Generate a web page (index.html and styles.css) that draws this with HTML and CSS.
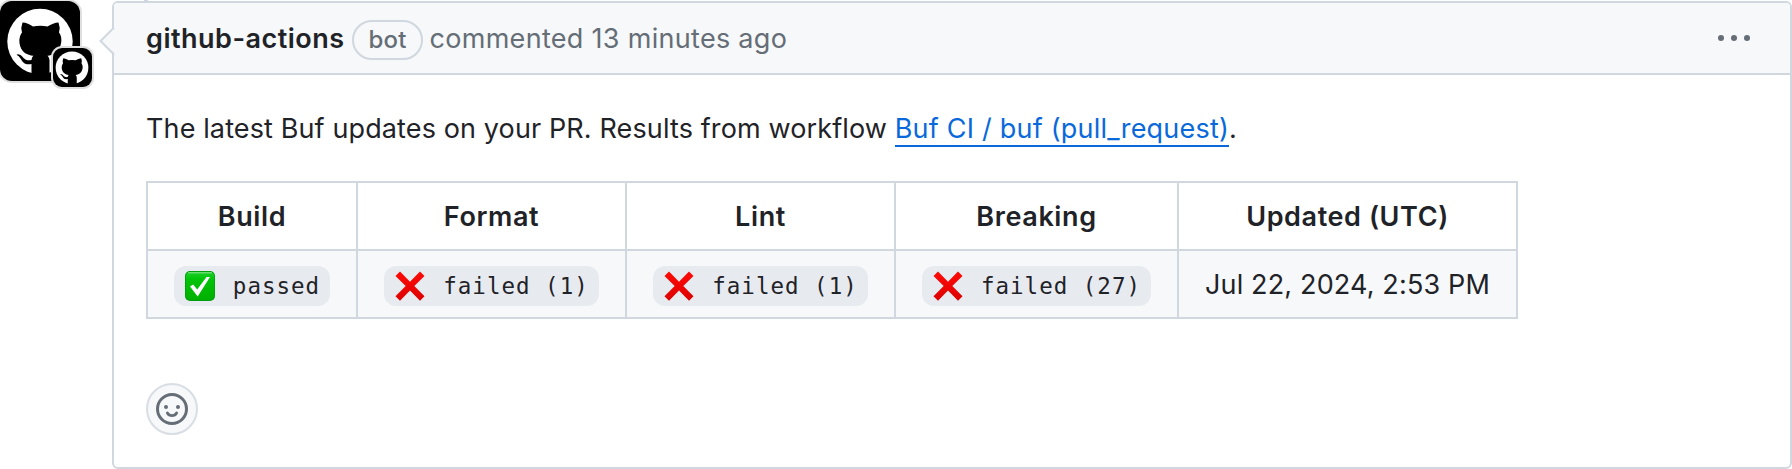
FILE: index.html
```html
<!DOCTYPE html>
<html lang="en">
<head>
<meta charset="utf-8">
<title>Buf CI comment</title>
<link rel="stylesheet" href="styles.css">
</head>
<body>
<svg class="defs" width="0" height="0" aria-hidden="true">
  <symbol id="mark" viewBox="0 0 80 80"><circle cx="40" cy="41.500" r="32.700" fill="#fff"/><path d="M22.500 22.500C26 22.500 30 24.500 33 26.500Q40.500 25 47.500 26.500C51 24.500 55 22.500 58.500 22.500Q60.500 27.500 59 32.500C62 36.500 62 42 60 47C58 52.500 53.500 55 47.500 55.800Q50 58 49.500 63V76H31.500V64C24 65.500 22.500 61.500 20.500 58.500Q19 56 16.500 54.800Q17.500 53.500 20.500 55C23.500 57 24.500 61.500 31.500 60Q31.500 57.500 33.300 55.800C27 55 22.500 52.500 20.500 47C18.700 42 19 36.500 22 32.500Q20.500 27.500 22.500 22.500Z" fill="#000"/></symbol>
  <symbol id="cross" viewBox="0 0 30 30"><path d="M5 .500 15 10.800 25 .500 29.500 5 19.300 15 29.500 25.300 25 29.700 15 19.400 5 29.700 .500 25.300 10.700 15 .500 5Z" fill="url(#red)"/></symbol>
  <linearGradient id="red" x1="0" y1="0" x2="0" y2="1"><stop offset="0" stop-color="#ff0a05"/><stop offset="1" stop-color="#dc0000"/></linearGradient>
  <linearGradient id="green" x1="0" y1="0" x2="0" y2="1"><stop offset="0" stop-color="#1fd02b"/><stop offset=".25" stop-color="#00c408"/><stop offset="1" stop-color="#00b000"/></linearGradient>
</svg>
<div class="timeline">
  <div class="avatar">
    <svg class="avatar-mark"><use href="#mark"/></svg>
    <div class="avatar-badge"><svg class="badge-mark"><use href="#mark"/></svg></div>
  </div>
  <article class="comment">
    <svg class="caret" width="16" height="28" viewBox="0 0 16 28"><path d="M16 0 2 13.500 16 27Z" fill="#f6f8fa"/><path d="M15 .5 1.500 14 15 27.500" fill="none" stroke="#d0d7de" stroke-width="2"/></svg>
    <header class="comment-header">
      <strong class="author">github-actions</strong>
      <span class="label">bot</span>
      <span class="meta">commented 13 minutes ago</span>
      <svg class="kebab" width="32" height="32" viewBox="0 0 32 32" fill="#656d76"><circle cx="3" cy="16" r="3"/><circle cx="16" cy="16" r="3"/><circle cx="29" cy="16" r="3"/></svg>
    </header>
    <div class="comment-body">
      <p class="summary">The latest Buf updates on your PR. Results from workflow <a class="link" href="#">Buf CI / buf (pull_request)</a>.</p>
      <table class="results">
        <colgroup><col class="c-build"><col class="c-format"><col class="c-lint"><col class="c-breaking"><col class="c-updated"></colgroup>
        <thead><tr><th>Build</th><th>Format</th><th>Lint</th><th>Breaking</th><th>Updated (UTC)</th></tr></thead>
        <tbody><tr>
          <td><code class="status"><svg class="emoji" viewBox="0 0 30 30"><rect width="30" height="30" rx="5" fill="#009c10"/><rect x=".8" y="1" width="28.400" height="28" rx="4.500" fill="url(#green)"/><path d="M3 1.800H27" stroke="#8be58c" stroke-width="1"/><path d="M5 15.500 8.200 13.500 12.200 18.500 21.500 6 25 6 12.700 25.500Z" fill="#fff"/></svg>passed</code></td>
          <td><code class="status"><svg class="emoji"><use href="#cross"/></svg>failed (1)</code></td>
          <td><code class="status"><svg class="emoji"><use href="#cross"/></svg>failed (1)</code></td>
          <td><code class="status"><svg class="emoji"><use href="#cross"/></svg>failed (27)</code></td>
          <td class="date">Jul 22, 2024, 2:53 PM</td>
        </tr></tbody>
      </table>
      <button class="react" aria-label="Add reaction"><svg width="32" height="32" viewBox="0 0 16 16" fill="#656d76"><path d="M8 0a8 8 0 1 1 0 16A8 8 0 0 1 8 0ZM1.500 8a6.500 6.500 0 1 0 13 0 6.500 6.500 0 0 0-13 0Z"/><circle cx="5" cy="7" r="1"/><circle cx="11" cy="7" r="1"/><path d="M5.700 10C6.200 10.900 7 11.300 8 11.300S9.800 10.900 10.300 10" fill="none" stroke="#656d76" stroke-width="1.400" stroke-linecap="round"/></svg></button>
    </div>
  </article>
</div>
</body>
</html>
```
FILE: styles.css
```css
* { box-sizing: border-box; }
body {
  margin: 0;
  background: #fff;
  color: #1f2328;
  font-family: Inter, "Liberation Sans", sans-serif;
  font-size: 27px;
  overflow: hidden;
}
.defs { position: absolute; }
.timeline {
  display: flex;
  gap: 32px;
  height: 469px;
  padding-top: 1px;
  background: linear-gradient(#d0d7de, #d0d7de) 144px 0 / 4px 1px no-repeat;
}
.avatar {
  position: relative;
  flex: none;
  width: 80px;
  height: 80px;
  border-radius: 12px;
  background: #000;
  box-shadow: 0 0 0 2px #dfdfdf;
}
.avatar-mark { position: absolute; left: 0; top: -1px; width: 80px; height: 80px; }
.avatar-badge {
  position: absolute;
  left: 53px;
  top: 47px;
  width: 39px;
  height: 39px;
  border-radius: 9px;
  background: #000;
  box-shadow: 0 0 0 2px #dfdfdf;
}
.badge-mark { position: absolute; left: -1px; top: -1px; width: 40px; height: 40px; }
.comment {
  position: relative;
  flex: 1;
  border: 2px solid #d0d7de;
  border-radius: 6px;
}
.caret { position: absolute; left: -15px; top: 24px; }
.comment-header {
  display: flex;
  align-items: center;
  height: 72px;
  padding: 0 25px 0 32px;
  border-bottom: 2px solid #d0d7de;
  border-radius: 4px 4px 0 0;
  background: #f6f8fa;
  color: #656d76;
  white-space: nowrap;
}
.author { width: 206px; color: #1f2328; font-weight: 600; letter-spacing: 0.5px; }
.label {
  width: 71px;
  height: 40px;
  margin-top: 3px;
  border: 2px solid #d0d7de;
  border-radius: 20px;
  font-size: 24px;
  font-weight: 500;
  letter-spacing: 0.2px;
  line-height: 36px;
  text-align: center;
}
.meta { margin-left: 6.5px; letter-spacing: 0.3px; }
.kebab { margin-left: auto; margin-right: 15px; }
.comment-body { padding: 32px 32px 0; }
.summary {
  margin: 0 0 32px;
  height: 42px;
  line-height: 44px;
  letter-spacing: 0.12px;
  white-space: nowrap;
}
.link {
  border-bottom: 2px solid #0969da;
  color: #0969da;
  letter-spacing: 0.22px;
  text-decoration: none;
}
.results {
  width: 1372px;
  table-layout: fixed;
  border: solid #d0d7de;
  border-width: 2px 0 0 2px;
  border-collapse: separate;
  border-spacing: 0;
}
.c-build { width: 210px; }
.c-format, .c-lint { width: 269px; }
.c-breaking { width: 283px; }
.c-updated { width: 339px; }
.results th, .results td {
  height: 68px;
  padding: 0;
  border: solid #d0d7de;
  border-width: 0 2px 2px 0;
  text-align: center;
  vertical-align: middle;
  white-space: nowrap;
}
.results th { font-weight: 600; letter-spacing: 0.6px; }
.results td { background: #f6f8fa; }
.results .date { letter-spacing: 0.15px; }
.status {
  display: inline-flex;
  align-items: center;
  height: 40px;
  margin-top: 3px;
  padding: 0 10px 0 11px;
  border-radius: 12px;
  background: #e7eaef;
  font-family: "DejaVu Sans Mono", monospace;
  font-size: 22.5px;
  letter-spacing: 1px;
  vertical-align: middle;
}
.emoji { width: 30px; height: 30px; margin-right: 18px; }
.react {
  display: flex;
  align-items: center;
  justify-content: center;
  width: 52px;
  height: 52px;
  margin-top: 64px;
  padding: 0;
  border: 2px solid #d8dee4;
  border-radius: 50%;
  background: #f6f8fa;
}
```
